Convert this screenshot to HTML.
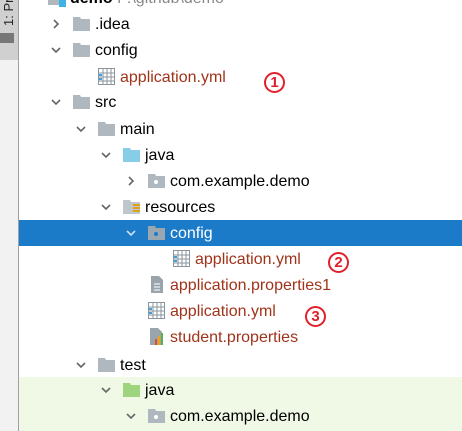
<!DOCTYPE html>
<html><head><meta charset="utf-8"><style>
body{margin:0;width:462px;height:431px;overflow:hidden;background:#fff;position:relative;font-family:"Liberation Sans","Noto Sans CJK SC",sans-serif;font-size:16px;color:#000}
.side{position:absolute;left:0;top:0;width:18px;height:431px;background:#f2f2f2;border-right:1px solid #a0a0a0}
.side .t{position:absolute;left:0;top:0;width:18px;height:60px;background:#d0d0d0}
.r{position:absolute;height:26px;left:19px;right:0}
.t1{position:absolute;top:4px;line-height:20px;white-space:nowrap}
.y{color:#a0331a}
.ch{position:absolute;top:8px;width:10px;height:10px}
.f{position:absolute;top:6px;width:17px;height:14px}
.c{position:absolute;width:17px;height:17px;border:2px solid #e0202a;border-radius:50%;color:#e0202a;font-weight:bold;font-size:15px;line-height:17px;text-align:center;box-sizing:content-box}
</style></head><body>
<div class="side"><div class="t"></div>
<div style="position:absolute;left:1px;top:0;font-size:13px;color:#222;writing-mode:vertical-rl;transform:rotate(180deg);height:26px;width:16px;line-height:16px;white-space:nowrap">1: Pr</div>
<div style="position:absolute;left:0px;top:33px;width:14px;height:10px;background:#777"></div></div>

<svg width="0" height="0" style="position:absolute">
<defs>
<symbol id="dn" viewBox="0 0 10 10"><path d="M1 3 L5 7 L9 3" fill="none" stroke="#666" stroke-width="1.6"/></symbol>
<symbol id="dnw" viewBox="0 0 10 10"><path d="M1 3 L5 7 L9 3" fill="none" stroke="#cfe0f0" stroke-width="1.6"/></symbol>
<symbol id="rt" viewBox="0 0 10 10"><path d="M3 1 L7 5 L3 9" fill="none" stroke="#666" stroke-width="1.6"/></symbol>
<symbol id="fd" viewBox="0 0 17 14"><path d="M0 0 H7 L8 2 H17 V14 H0Z" fill="#afb8bf"/></symbol>
<symbol id="fb" viewBox="0 0 17 14"><path d="M0 0 H7 L8 2 H17 V14 H0Z" fill="#88cde8"/></symbol>
<symbol id="fg" viewBox="0 0 17 14"><path d="M0 0 H7 L8 2 H17 V14 H0Z" fill="#9fd47f"/></symbol>
<symbol id="fp" viewBox="0 0 17 14"><path d="M0 0 H7 L8 2 H17 V14 H0Z" fill="#afb8bf"/><circle cx="8" cy="8" r="2" fill="#fff"/></symbol>
<symbol id="fps" viewBox="0 0 17 14"><path d="M0 0 H7 L8 2 H17 V14 H0Z" fill="#9aa6b0"/><circle cx="8" cy="8" r="2" fill="#1b7bc8"/></symbol>
<symbol id="fr" viewBox="0 0 17 14"><path d="M0 0 H7 L8 2 H17 V14 H0Z" fill="#c0c7cc"/><rect x="10" y="7" width="7" height="2" fill="#e0a020"/><rect x="10" y="10" width="7" height="2" fill="#e0a020"/><rect x="10" y="4" width="7" height="2" fill="#e0a020"/></symbol>
<symbol id="yml" viewBox="0 0 17 17"><rect x="0.5" y="0.5" width="16" height="16" fill="#fff" stroke="#8a959e"/><path d="M0 5H17M0 9H17M0 13H17M5 0V17M9 0V17M13 0V17" stroke="#8a959e" stroke-width="1"/><rect x="1" y="6" width="3" height="2" fill="#40a0d8"/><rect x="1" y="10" width="3" height="2" fill="#40a0d8"/></symbol>
<symbol id="pr" viewBox="0 0 17 17"><path d="M3 0H11L15 4V17H3Z" fill="#9aa4ab"/><path d="M6 8H12M6 11H12M6 14H12" stroke="#fff"/></symbol>
<symbol id="st" viewBox="0 0 17 17"><path d="M2 0H10L14 4V17H2Z" fill="#9aa4ab"/><rect x="7" y="11" width="2" height="6" fill="#e05020"/><rect x="10" y="8" width="2" height="9" fill="#f0a020"/><rect x="13" y="5" width="2" height="12" fill="#60b040"/></symbol>
</defs></svg>

<div class="r" style="top:-15px">
<svg class="ch" style="left:32px"><use href="#dn"/></svg>
<div style="position:absolute;left:29px;top:8px;width:14px;height:12px;background:#afb8bf"></div>
<div style="position:absolute;left:40px;top:15px;width:7px;height:7px;background:#3fb2e6"></div>
<div class="t1" style="left:51px"><b>demo</b> <span style="color:#888">F:\github\demo</span></div></div>

<div class="r" style="top:11px"><svg class="ch" style="left:32px"><use href="#rt"/></svg><svg class="f" style="left:54px"><use href="#fd"/></svg><div class="t1" style="left:76px">.idea</div></div>
<div class="r" style="top:37px"><svg class="ch" style="left:32px"><use href="#dn"/></svg><svg class="f" style="left:54px"><use href="#fd"/></svg><div class="t1" style="left:76px">config</div></div>
<div class="r" style="top:64px"><svg class="f" style="left:79px;top:4px;height:17px"><use href="#yml"/></svg><div class="t1 y" style="left:101px">application.yml</div></div>
<div class="r" style="top:89px"><svg class="ch" style="left:32px"><use href="#dn"/></svg><svg class="f" style="left:54px"><use href="#fd"/></svg><div class="t1" style="left:76px">src</div></div>
<div class="r" style="top:116px"><svg class="ch" style="left:57px"><use href="#dn"/></svg><svg class="f" style="left:79px"><use href="#fd"/></svg><div class="t1" style="left:101px">main</div></div>
<div class="r" style="top:142px"><svg class="ch" style="left:82px"><use href="#dn"/></svg><svg class="f" style="left:104px"><use href="#fb"/></svg><div class="t1" style="left:126px">java</div></div>
<div class="r" style="top:168px"><svg class="ch" style="left:107px"><use href="#rt"/></svg><svg class="f" style="left:129px"><use href="#fp"/></svg><div class="t1" style="left:151px">com.example.demo</div></div>
<div class="r" style="top:194px"><svg class="ch" style="left:82px"><use href="#dn"/></svg><svg class="f" style="left:104px"><use href="#fr"/></svg><div class="t1" style="left:126px">resources</div></div>
<div class="r" style="top:220px;background:#1b7bc8;color:#fff"><svg class="ch" style="left:107px"><use href="#dnw"/></svg><svg class="f" style="left:129px"><use href="#fps"/></svg><div class="t1" style="left:151px">config</div></div>
<div class="r" style="top:246px"><svg class="f" style="left:154px;top:4px;height:17px"><use href="#yml"/></svg><div class="t1 y" style="left:176px">application.yml</div></div>
<div class="r" style="top:272px"><svg class="f" style="left:129px;top:4px;height:17px"><use href="#pr"/></svg><div class="t1 y" style="left:151px">application.properties1</div></div>
<div class="r" style="top:298px"><svg class="f" style="left:129px;top:4px;height:17px"><use href="#yml"/></svg><div class="t1 y" style="left:151px">application.yml</div></div>
<div class="r" style="top:324px"><svg class="f" style="left:129px;top:4px;height:17px"><use href="#st"/></svg><div class="t1 y" style="left:151px">student.properties</div></div>
<div class="r" style="top:352px"><svg class="ch" style="left:57px"><use href="#dn"/></svg><svg class="f" style="left:79px"><use href="#fd"/></svg><div class="t1" style="left:101px">test</div></div>
<div class="r" style="top:377px;height:54px;background:#eff9e6"></div>
<div class="r" style="top:377px"><svg class="ch" style="left:82px"><use href="#dn"/></svg><svg class="f" style="left:104px"><use href="#fg"/></svg><div class="t1" style="left:126px">java</div></div>
<div class="r" style="top:403px"><svg class="ch" style="left:107px"><use href="#dn"/></svg><svg class="f" style="left:129px"><use href="#fp"/></svg><div class="t1" style="left:151px">com.example.demo</div></div>

<div class="c" style="left:264px;top:72px">1</div>
<div class="c" style="left:328px;top:252px">2</div>
<div class="c" style="left:305px;top:306px">3</div>
</body></html>
